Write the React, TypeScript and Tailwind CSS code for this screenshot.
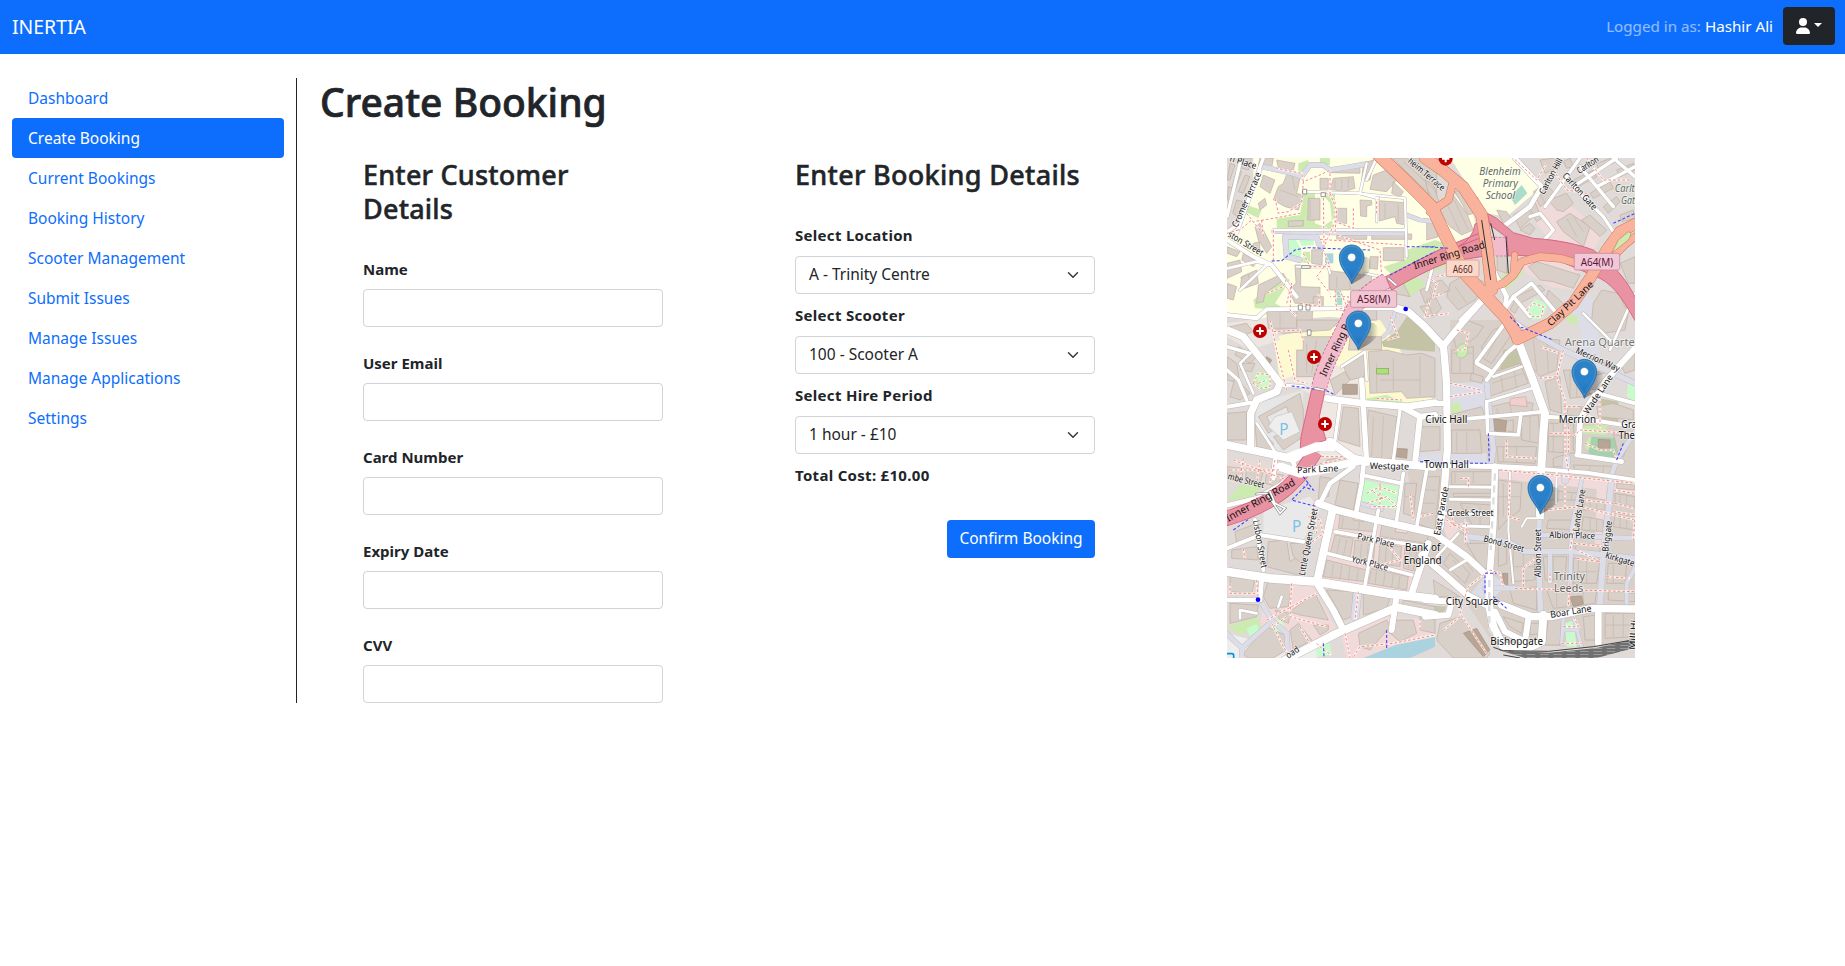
import { FaUser } from "react-icons/fa6";

const navItems = [
  "Dashboard",
  "Create Booking",
  "Current Bookings",
  "Booking History",
  "Scooter Management",
  "Submit Issues",
  "Manage Issues",
  "Manage Applications",
  "Settings",
];

const customerFields = ["Name", "User Email", "Card Number", "Expiry Date", "CVV"];

const bookingFields = [
  { label: "Select Location", value: "A - Trinity Centre" },
  { label: "Select Scooter", value: "100 - Scooter A" },
  { label: "Select Hire Period", value: "1 hour - £10" },
];

type Road = [width: number, d: string];
type Area = [fill: string, points: string];
type Label = [text: string, x: number, y: number, length: number, angle?: number, size?: number, fill?: string];

const areas: Area[] = [
  ["#ffffe5", "100,24 500,24 690,200 760,290 600,330 480,400 430,510 330,500 200,510 21,500 21,250 60,220 100,110"],
  ["#ffffe5", "690,24 885,24 965,110 860,200 800,190 740,100"],
  ["#ffffe5", "615,180 650,180 690,120 760,190 770,250 700,290 650,270 615,200"],
  ["#fdfad2", "160,560 240,545 480,510 645,760 440,760 400,680 280,700 180,690"],
  ["#ece5e0", "21,520 160,500 180,570 90,600 21,560"],
  ["#efe7e2", "180,690 340,640 420,690 430,920 300,920 290,740"],
  ["#e6e6e6", "110,760 250,720 245,900 180,920 105,890"],
  ["#f1dada", "940,130 1000,120 1150,250 1120,300 1000,290 950,220"],
  ["#f1dada", "900,340 980,330 1080,350 1060,420 990,410 920,370"],
  ["#e4dbd6", "21,920 220,940 180,1010 21,1000"],
  ["#f1dada", "320,1090 640,1160 590,1330 295,1290"],
  ["#f1dada", "150,1290 280,1310 350,1440 200,1520 120,1420"],
  ["#f1dada", "360,1440 500,1400 645,1410 645,1450 450,1524 380,1524"],
  ["#d9d0c9", "690,800 980,800 1245,840 1245,980 1245,1500 820,1480 700,1300 600,1200 560,950 690,960"],
  ["#f1dada", "830,962 1245,1000 1245,1030 830,985"],
  ["#f1dada", "650,1080 700,1120 790,1240 765,1260 690,1190"],
  ["#f1dada", "1130,1000 1160,1000 1150,1200 1125,1200"],
  ["#dddde8", "690,680 790,690 800,760 780,790 700,770"],
  ["#dddde8", "600,910 800,910 805,950 600,955"],
  ["#dddde8", "745,1340 805,1265 860,1305 820,1345"],
  ["#dddde8", "1030,440 1110,430 1130,490 1100,620 1060,610 1090,550"],
  ["#dddde8", "1075,495 1130,500 1140,620 1090,600"],
  ["#d9d0c9", "690,510 870,510 940,690 690,700"],
  ["#e9e9e9", "130,1080 270,1040 300,1080 250,1170 130,1150"],
  ["#eeeeee", "21,1450 210,1500 300,1480 290,1524 21,1524"],
  ["#cdebb0", "250,130 285,130 285,220 340,240 330,160 305,130 345,130 345,205 300,235 170,235 170,205 240,195"],
  ["#cdebb0", "235,40 265,30 268,65 235,65"],
  ["#cdebb0", "300,24 330,24 330,45 300,45"],
  ["#cdebb0", "80,165 125,180 115,205 75,185"],
  ["#cdebb0", "100,450 190,375 210,390 165,460 200,480 105,475"],
  ["#cdebb0", "490,350 600,315 580,375 620,400 570,440 530,420 510,370"],
  ["#cdebb0", "250,305 270,305 272,335 250,340"],
  ["#cdebb0", "560,300 645,270 700,290 560,345"],
  ["#cdebb0", "615,350 690,325 690,345 615,375"],
  ["#cdebb0", "95,680 120,660 155,670 155,700 140,725 110,715"],
  ["#cdebb0", "840,380 900,345 910,370 850,430"],
  ["#cdebb0", "1030,495 1070,495 1075,525 1050,520"],
  ["#cdebb0", "690,762 720,755 725,795 700,800"],
  ["#cdebb0", "1085,830 1160,820 1160,855 1085,850"],
  ["#cdebb0", "1105,860 1130,870 1125,905 1095,895"],
  ["#cdebb0", "440,745 500,735 550,755 440,765"],
  ["#cdebb0", "21,1050 60,1005 130,1005 90,1050"],
  ["#cdebb0", "21,1430 110,1400 125,1430 60,1455"],
  ["#cdebb0", "1180,290 1240,235 1240,275 1185,310"],
  ["#c8facc", "190,265 225,265 245,300 240,335 205,325"],
  ["#c8facc", "235,268 280,262 282,285 245,288"],
  ["#c8facc", "150,1420 190,1400 195,1510 165,1465"],
  ["#c8facc", "288,1490 330,1480 335,1515 290,1522"],
  ["#c8facc", "430,990 540,1010 530,1080 420,1055"],
  ["#c8facc", "920,480 945,445 985,465 965,505 935,510"],
  ["#c8facc", "1225,690 1245,690 1245,755 1220,740"],
  ["#c8facc", "80,1435 110,1422 118,1445 88,1458"],
  ["#c8facc", "1035,1420 1060,1410 1070,1490 1040,1490"],
  ["#aad3df", "315,310 340,310 340,340 315,340"],
  ["#aaddcc", "345,420 367,425 367,465 345,465"],
  ["#aaddcc", "870,140 905,105 922,130 885,165"],
  ["#a5d1ad", "1115,860 1190,865 1190,935 1105,910"],
  ["#c5c3a6", "485,575 530,545 560,500 590,500 645,560 645,605 560,600 490,590"],
  ["#c5c3a6", "850,600 890,590 905,645 840,660"],
  ["#c5c3a6", "1140,745 1195,755 1195,820 1135,805"],
  ["#aad3df", "430,1524 530,1484 645,1462 645,1490 570,1524"],
  ["#c8c4b0", "615,1365 680,1370 670,1390 615,1390"],
];

const buildings = [
  "205,60 240,85 230,130 250,135 235,180 195,170 160,150 175,110 190,100",
  "130,75 165,90 150,130 120,110",
  "120,24 160,24 155,55 115,45",
  "170,30 225,40 220,60 175,55",
  "265,145 300,145 300,210 263,210",
  "300,85 325,85 325,118 300,118",
  "335,55 420,52 420,70 335,68",
  "340,85 400,80 405,115 370,125 330,118",
  "350,175 380,175 380,220 350,220",
  "420,150 455,152 455,165 440,168 440,200 422,198",
  "478,152 555,158 555,225 530,220 525,200 478,213",
  "460,75 500,60 530,90 500,125 450,118",
  "430,40 460,30 450,90 425,90",
  "520,95 550,125 540,140 515,130",
  "205,213 250,211 250,228 205,230",
  "350,255 440,255 440,268 350,268",
  "455,250 575,252 575,268 455,268",
  "490,293 552,293 552,332 490,332",
  "450,320 475,320 472,358 448,355",
  "275,300 308,298 306,345 275,340",
  "225,345 242,345 242,410 300,412 300,460 225,460 205,420 228,400",
  "327,362 455,377 455,420 327,420",
  "280,440 310,440 310,475 280,475",
  "140,485 278,480 275,535 145,535",
  "395,470 470,480 470,510 395,510",
  "500,395 550,400 570,440 520,430",
  "115,405 190,370 198,385 135,430 130,455 110,460",
  "65,380 110,360 115,400 60,420",
  "21,340 60,330 65,365 21,385",
  "105,230 120,220 155,290 140,310 115,270",
  "115,160 135,145 140,165 120,180",
  "100,280 118,275 120,300 100,300",
  "21,400 50,410 40,450 21,445",
  "30,40 45,45 30,90 21,90",
  "50,60 65,65 45,120 35,115",
  "75,75 90,80 70,130 55,125",
  "25,110 40,115 30,150 21,150",
  "50,150 70,155 55,200 38,190",
  "65,24 95,24 85,60 65,55",
  "21,290 60,305 50,320 21,310",
  "70,310 110,335 100,350 65,330",
  "520,24 560,24 650,110 650,150 610,120",
  "575,24 620,24 650,60 650,90",
  "600,420 625,410 640,450 615,460",
  "600,470 645,460 645,500 620,500",
  "615,90 640,105 660,165 630,145",
  "655,165 700,135 740,190 760,240 725,255 690,230 670,200",
  "620,205 640,220 655,260 620,270",
  "705,125 725,120 760,190 745,195",
  "880,195 920,170 940,200 900,235",
  "925,165 945,155 965,205 950,215",
  "830,180 860,185 880,215 855,230",
  "900,240 930,220 945,235 930,255",
  "940,125 975,100 1000,125 985,150 960,170",
  "985,150 1040,130 1060,160 1030,185 1010,180",
  "1010,215 1050,190 1110,230 1090,290 1030,245",
  "1085,210 1110,195 1160,240 1140,260",
  "1030,35 1050,24 1060,50 1040,55",
  "960,30 1000,24 1020,50 975,70",
  "1060,90 1120,60 1130,80 1075,110",
  "1110,130 1170,95 1180,115 1120,145",
  "1150,170 1190,140 1200,155 1165,190",
  "1190,60 1240,40 1245,60 1200,80",
  "1130,40 1175,24 1190,34 1135,60",
  "1200,195 1240,180 1245,205 1205,215",
  "830,270 860,270 860,370 832,360",
  "690,400 740,370 800,400 765,450 715,480 680,440",
  "625,400 665,390 690,420 645,440",
  "620,450 645,440 665,475 640,500",
  "925,350 950,335 1080,375 1060,415 1000,395 960,390",
  "890,440 960,405 975,420 900,460 885,490 870,480",
  "985,420 1040,470 1020,500 975,455",
  "1120,460 1145,420 1195,430 1225,490 1215,540 1150,550 1115,510",
  "1200,340 1245,320 1245,400 1225,400",
  "165,540 230,540 230,510 360,510 330,540 190,550",
  "250,560 370,560 330,620 300,680 230,680 230,600 250,600",
  "390,560 485,560 485,600 385,600",
  "445,605 500,600 560,615 605,610 645,625 645,740 560,745 545,725 450,730",
  "370,650 435,610 435,680 390,690",
  "330,690 375,665 390,690 345,735",
  "440,840 445,780 530,800 520,930 445,925",
  "370,770 415,775 420,890 355,870",
  "115,800 240,730 250,780 250,860 190,900 160,860 220,840 200,770 140,800 160,840 145,850",
  "21,790 80,785 80,870 21,870",
  "105,820 160,880 155,905 110,890",
  "55,590 110,620 90,640 45,615",
  "70,640 105,640 95,665 60,660",
  "21,620 50,640 60,700 21,690",
  "45,680 90,730 60,750 30,740",
  "30,530 80,520 100,545 60,560",
  "700,560 740,510 790,530 770,560 710,600",
  "695,600 760,590 760,670 695,670",
  "785,590 820,540 865,520 870,560 815,640 790,625",
  "755,670 790,680 785,700 750,690",
  "690,795 785,770 795,800 700,810",
  "695,840 780,840 785,910 695,910",
  "600,830 660,830 660,900 600,905",
  "810,770 900,750 940,760 935,785 810,800",
  "810,670 900,640 925,700 805,740",
  "820,820 880,810 880,845 820,840",
  "905,800 955,795 960,880 905,870",
  "830,890 950,890 945,940 835,935",
  "905,560 1020,570 1010,660 960,680 925,640",
  "975,695 1020,680 1025,790 990,780",
  "1030,660 1090,660 1095,740 1050,745",
  "1045,770 1085,770 1080,800 1040,795",
  "985,820 1060,820 1065,910 985,905",
  "1000,925 1030,915 1030,950 1000,950",
  "1090,620 1160,640 1190,660 1110,680",
  "1130,770 1180,760 1240,780 1240,810 1135,800",
  "1060,860 1085,860 1080,900 1060,900",
  "1200,640 1245,610 1245,660 1215,670",
  "1060,945 1190,950 1180,980 1065,965",
  "695,965 815,965 815,1005 695,1005",
  "700,1030 815,1030 815,1040 700,1040",
  "21,950 70,955 65,990 21,985",
  "80,955 130,965 120,1000 75,995",
  "140,970 190,975 170,1010 135,1000",
  "320,930 370,920 375,940 320,950",
  "300,980 335,985 325,1040 295,1045",
  "360,990 415,1000 400,1080 345,1065",
  "555,1000 590,1000 580,1100 550,1090",
  "610,980 660,980 645,1140 590,1120",
  "360,1095 400,1100 400,1110 430,1115 430,1105 465,1112 460,1145 355,1135",
  "345,1155 400,1165 390,1225 330,1210",
  "405,1170 465,1180 460,1235 400,1225",
  "485,1125 530,1130 525,1145 560,1150 565,1135 625,1155 620,1180 480,1160",
  "480,1180 545,1190 540,1250 475,1240",
  "555,1190 610,1200 590,1265 550,1255",
  "320,1230 440,1260 435,1295 310,1280",
  "455,1255 565,1280 560,1320 445,1300",
  "145,1175 200,1170 210,1235 240,1215 250,1250 235,1275 140,1250",
  "210,1180 260,1180 245,1240 220,1220",
  "35,1200 110,1190 115,1230 35,1225",
  "45,1145 110,1120 115,1150 50,1180",
  "30,1280 105,1290 95,1330 30,1325",
  "145,1290 215,1300 205,1370 150,1375 130,1340",
  "30,1360 115,1365 110,1400 30,1420",
  "165,1380 210,1390 205,1420 180,1410",
  "210,1385 285,1330 325,1410 240,1395",
  "70,1510 140,1430 195,1455 200,1500 160,1524 80,1524",
  "235,1420 275,1470 220,1500 210,1440",
  "280,1425 325,1425 325,1440 300,1455",
  "320,1320 400,1325 395,1400 370,1410",
  "430,1330 510,1345 500,1375 430,1395",
  "550,1350 645,1370 645,1390 545,1375",
  "415,1450 500,1410 510,1430 450,1500 420,1490",
  "530,1410 580,1410 590,1450 540,1475 510,1450",
  "600,1400 645,1410 645,1450 600,1440",
  "690,1175 725,1145 800,1240 775,1255",
  "615,1170 660,1200 650,1240 615,1215",
  "690,1210 750,1270 735,1300 670,1240",
  "640,1290 720,1340 645,1340",
  "720,1060 735,1060 815,1065 810,1130 760,1130",
  "740,1180 815,1180 810,1260 780,1250",
  "835,990 905,1000 900,1080 860,1110 835,1140",
  "835,1180 860,1190 860,1240 835,1250",
  "870,1190 945,1215 945,1290 875,1295",
  "870,1320 950,1310 950,1380 880,1360",
  "970,1220 1040,1220 1035,1290 975,1290",
  "975,1020 1080,1030 1075,1050 980,1050",
  "985,1110 1080,1110 1075,1140 980,1135",
  "1095,1040 1155,1050 1155,1080 1090,1080",
  "1090,1100 1150,1110 1150,1145 1085,1140",
  "1070,1180 1140,1185 1140,1205 1065,1200",
  "1060,1225 1140,1230 1130,1300 1060,1300",
  "980,1320 1130,1320 1125,1360 1000,1375",
  "985,1410 1025,1400 1020,1485 975,1485",
  "1090,1400 1130,1395 1130,1470 1095,1470",
  "1155,1390 1245,1390 1245,1460 1155,1465",
  "850,1400 910,1420 905,1450 870,1430",
  "930,1420 960,1420 960,1450 930,1455",
  "660,1420 720,1400 810,1510 800,1524 700,1524 650,1470",
  "1185,1030 1245,1040 1245,1070 1185,1060",
  "1185,1090 1245,1100 1245,1140 1180,1130",
  "1165,1240 1220,1240 1215,1300 1160,1300",
  "1165,1325 1245,1330 1245,1355 1165,1350",
  "1190,1000 1245,1005 1245,1020 1190,1015",
  "1180,850 1230,870 1210,920 1195,915",
];

const wallLines = [
  "M60 385L85 372L90 405M215 75L225 120M180 120L235 140M345 90V115M365 88V120M385 84V116M495 160V205M535 165V215M270 150V205",
  "M350 380V415M390 382V418M180 490V530M230 485V530M470 640V725M520 625V720M600 620V735M480 690H600M260 580V670M290 570L275 670",
  "M700 610H755M720 595V665M850 530L800 620M815 700L910 670M840 665L850 725M880 650L890 715M830 775L835 795M870 765L875 790",
  "M370 1100L365 1135M420 1110L415 1140M360 1165L350 1215M380 1170L370 1218M425 1180L420 1228M445 1182L440 1230M500 1185L495 1242M520 1190L515 1245M570 1200L565 1255M590 1205L580 1260",
  "M340 1240L335 1285M365 1245L360 1288M390 1250L385 1292M415 1255L410 1294M470 1262L465 1304M495 1267L490 1308M520 1272L515 1312M540 1276L535 1316",
  "M850 1000V1100M835 1040H900M880 1200V1290M910 1205V1290M875 1250H945M1000 1225V1290M1075 1230V1300M1100 1230V1300M1060 1265H1130",
  "M1000 1030V1050M1030 1030V1050M1055 1032V1050M1110 1045V1080M1130 1048V1080M1110 1105V1142M1130 1108V1143M1200 1035V1062M1220 1038V1066M1200 1095V1134M1220 1098V1138",
  "M1010 1320V1370M1050 1320V1365M1090 1320V1362M1180 1395V1460M1210 1392V1460M1155 1425H1245M1180 1245V1300M700 1180L760 1265M700 1230L720 1255",
  "M1000 820V905M1030 820V908M985 860H1062M930 800V875M1050 665V740M1070 662V742M940 570L950 665M980 568L985 668M850 890V935M890 890V938M1110 950V970M1150 952V972",
  "M555 1040H585M600 1020H650M600 1060H645M600 1090H640M740 1070V1120M780 1070V1125M705 968V1000M760 968V1000M460 800L455 920M490 800L485 925M710 845V905M740 845V905",
  "M535 45L635 135M550 35L650 125M590 40L645 95M700 145L745 240M680 160L720 245M960 130L975 160M1040 205L1070 260M1060 200L1090 245M705 410L740 460M740 385L775 430",
];

const darkBuildings = [
  "368,703 412,703 412,733 368,733",
  "140,620 155,630 148,642 135,632",
  "528,895 562,897 560,925 526,920",
  "815,805 860,812 855,850 813,840",
  "1135,868 1170,870 1170,900 1135,895",
  "1050,1340 1085,1338 1090,1362 1060,1370",
  "730,1450 770,1435 810,1500 790,1520",
  "848,1270 863,1270 863,1305 848,1300",
];

const pedestrianWays: Road[] = [
  [14, "M125 50L210 68L245 80L270 45L310 45L330 60M330 60L380 52L440 42"],
  [16, "M195 260L290 262L300 290M195 260L200 320L240 330"],
  [10, "M160 245L340 250L550 252"],
  [12, "M560 195L600 210L645 215"],
  [16, "M745 1160L865 1175L915 1205L1055 1205L1155 1215L1245 1225"],
  [16, "M958 1095L955 1225L962 1390"],
  [18, "M1175 990L1150 1215L1140 1365"],
  [12, "M1085 990L1055 1135L1050 1305"],
  [14, "M965 1155L1245 1165"],
  [12, "M990 1205L990 1295"],
  [14, "M795 1315L885 1315"],
  [14, "M120 1350L155 1410L200 1450L205 1524"],
  [14, "M155 1415L65 1495L65 1524M21 1452L62 1490"],
  [24, "M413 1325L405 1400"],
  [16, "M800 690L810 800L820 900L812 950"],
  [22, "M1040 925L1035 990"],
  [14, "M1245 845L1190 930L1170 990"],
  [12, "M418 1060L485 1078"],
  [10, "M450 1190L455 1230"],
  [10, "M735 1110L738 1165L745 1175"],
  [12, "M1245 1255L1220 1300L1220 1360"],
  [10, "M1030 1400L1025 1480M1060 1400L1085 1490M1030 1440L1075 1440"],
  [16, "M860 510L930 545L1030 600L1245 700"],
  [10, "M525 485L510 540L490 560"],
];

const whiteRoads: Road[] = [
  [10, "M130 24L95 120L50 250M21 200L60 40"],
  [12, "M21 270L100 320L155 345L230 440"],
  [10, "M21 245L60 220L120 60"],
  [8, "M21 355L110 335L155 345M60 420L140 345"],
  [12, "M21 495L110 505L140 478L400 475L530 475"],
  [7, "M160 240L555 240M555 150L560 320M250 125L420 130L475 145M420 130L440 40"],
  [6, "M230 350L325 350L330 370M435 370L500 385M470 150L470 215M410 130L555 145"],
  [22, "M530 475L565 485L615 530L670 590"],
  [8, "M470 24L440 90M645 25L700 80"],
  [22, "M21 540L70 560L110 610L180 700L170 725L110 750L92 790L92 890"],
  [12, "M21 770L92 758"],
  [24, "M21 885L130 907L220 927L270 900L330 875L400 925L440 935"],
  [10, "M180 705L250 710M21 590L90 610M21 660L55 690L80 750"],
  [8, "M90 610L60 640L100 730M110 820L165 905"],
  [20, "M320 745L430 760L560 770L645 758"],
  [16, "M425 690L432 800L440 940"],
  [8, "M365 650L435 605L440 690"],
  [10, "M360 760L345 870"],
  [18, "M545 770L600 800L585 940M600 800L645 795"],
  [10, "M540 780L520 930"],
  [22, "M670 585L680 700L682 900L670 1050L660 1130"],
  [20, "M672 585L725 520L805 430"],
  [14, "M780 280L860 440L850 500"],
  [24, "M895 575L935 680L975 790L970 850L962 990L960 1095"],
  [16, "M645 945L830 950L960 957"],
  [12, "M960 957L1100 968L1245 990"],
  [20, "M825 950L820 1120L808 1290"],
  [24, "M400 930L640 950M410 935L240 970L180 950"],
  [16, "M615 760L680 760"],
  [9, "M800 755L935 715"],
  [11, "M800 755L803 850L895 855L903 790M745 806L970 785"],
  [12, "M980 800L1100 808L1245 830"],
  [18, "M1245 595L1155 695L1105 765L1080 810L1075 910"],
  [12, "M1115 725L1245 760"],
  [14, "M1070 915L1205 935"],
  [12, "M770 635L865 505M770 640L815 665M800 690L860 610L890 585"],
  [8, "M930 550L880 510L860 500M820 680L905 650"],
  [26, "M21 1265L150 1285L290 1295L500 1330L645 1347"],
  [24, "M338 1080L292 1290"],
  [22, "M295 1060L350 1080L470 1110L645 1150"],
  [14, "M300 1060L330 1000L400 950M410 1080L425 1000L430 950"],
  [20, "M290 1300L340 1380L370 1440"],
  [24, "M195 1530L350 1450L500 1385L530 1372L645 1395"],
  [18, "M530 1335L515 1440"],
  [11, "M345 1145L480 1170L620 1190M320 1210L500 1255L575 1275"],
  [11, "M475 1080L435 1305M530 1110L550 970M590 1130L620 960M425 975L545 1000"],
  [20, "M625 1180L575 1330"],
  [12, "M21 1195L120 1155L250 1175M105 1110L130 1260"],
  [14, "M125 1290L120 1350L21 1350"],
  [14, "M21 1066L110 1045L180 1005L230 965L215 925M165 930L160 985"],
  [8, "M60 1405L60 1380L110 1390M185 1340L175 1370"],
  [20, "M645 1150L670 1170L740 1220L805 1280"],
  [20, "M605 1215L675 1275L745 1337L800 1365"],
  [24, "M808 1280L808 1370L820 1430L850 1490L930 1492L965 1475L970 1395"],
  [22, "M845 1365L935 1400L995 1400L1115 1375L1245 1377"],
  [18, "M825 1385L855 1445L915 1475L925 1405"],
  [20, "M1135 1375L1135 1480"],
  [18, "M615 1350L695 1355L685 1395L615 1400"],
  [9, "M675 1090L815 1095M690 1048L815 1050M690 1010L815 1012M730 1128L810 1130"],
  [6, "M870 960L865 1140L880 1300M905 1130L920 1105L970 1105M1010 960L1008 1060"],
  [8, "M650 1220L715 1150M690 1260L740 1230"],
  [10, "M945 300L1000 240L960 190L930 200M1060 110L1150 200L1190 260M975 170L1080 24"],
  [10, "M1060 110L1190 24M1080 50L1130 110M1130 110L1245 50M1180 24L1245 80M1130 110L1180 170"],
  [14, "M850 230L930 170L965 110L885 24"],
  [9, "M640 340L620 420M780 450L720 510"],
  [11, "M880 440L935 400L1010 490M840 500L880 440L930 500"],
  [8, "M1245 430L1170 600M1090 490L1190 590"],
];

const primaryRoads: Road[] = [
  [36, "M475 14L555 90L635 170L680 265L735 370L790 430L860 505L895 562"],
  [34, "M615 24L665 58L730 112L785 195L802 300L815 420"],
  [22, "M630 185L685 150L702 85"],
  [22, "M805 415L850 400L880 375L905 335L960 320L1020 325L1090 345"],
  [18, "M880 370L884 315"],
  [32, "M892 568L990 520L1060 460L1110 385L1160 300L1200 245L1250 220"],
  [20, "M1115 320L1180 320L1215 285L1245 260"],
];

const footways = [
  "M165 145L175 190L205 185L245 160L250 95L300 75L330 60M250 95L245 70L170 55",
  "M310 130L312 290L345 215L345 150L320 130L310 130M330 70L330 130",
  "M80 190L100 215L160 205L240 190M130 260L125 210M160 240L160 330",
  "M400 175L400 235L345 215M470 190L470 150M300 268L555 285M350 255L480 300L485 380",
  "M120 240L95 210L60 240L45 240M330 130L350 180L345 250",
  "M250 310L270 350L330 350L310 300M320 340L290 380L330 430M345 420L350 480L380 470L360 420",
  "M200 460L215 400L210 480L230 500M380 500L385 440L330 440M240 460L300 470L295 430",
  "M21 250L55 240M140 430L190 410L200 385",
  "M100 700L115 670L150 675L150 710L120 715L100 700M115 700L140 690",
  "M205 600L225 690L260 700M150 510L170 600L200 720M160 545L240 540L250 575",
  "M470 745L545 750M510 500L535 560L500 570",
  "M30 960L200 960M40 930L200 990M70 925L60 990M120 930L110 1000M165 930L150 1000",
  "M290 920L370 920L380 935M300 940L340 935L370 925",
  "M620 380L650 400L640 440L670 430M630 450L615 500L690 490M650 380L690 370",
  "M740 110L780 150M1000 60L1040 120L1100 130M980 40L950 90L880 24M1100 24L1150 90L1230 90",
  "M920 480L940 460L970 470L965 500L935 500L920 480",
  "M710 540L745 550L735 600L705 600M690 700L780 720M690 740L790 725",
  "M1030 600L1010 680L960 685M1010 680L1035 750L1035 900L1050 990M1030 770L1080 770M990 850L1050 850M1045 830L1045 910",
  "M1100 790L1140 830L1140 740M1095 880L1140 900L1180 900L1190 930M1060 860L1080 840L1240 850",
  "M860 870L860 920L950 925M960 590L1020 610",
  "M840 960L1000 975L1245 1000M870 990L865 1100L900 1110",
  "M975 1080L1080 1070L1245 1110M1035 1000L1035 1080M1180 1020L1245 1030M1090 1050L1180 1060M1065 1120L1050 1200",
  "M910 1310L910 1255L960 1215M885 1315L1245 1325M1050 1300L1045 1370M990 1270L990 1300M1245 1095L1240 1170",
  "M1060 1180L1150 1190M1070 1200L1140 1235L1070 1225M1030 1430L1075 1430L1060 1400M1025 1480L1085 1480",
  "M735 1340L745 1310L810 1260L840 1270L850 1310M735 1185L740 1120L690 1130M745 1150L680 1110M700 1125L695 1080",
  "M725 1370L720 1390L800 1510M670 1440L720 1400",
  "M440 1030L480 1010L530 1030M480 1000L480 1070M440 1060L500 1040L530 1070L450 1070M460 1025L495 1050",
  "M215 1300L210 1400L320 1430M140 1410L290 1330M155 1420L190 1490L210 1520M240 1430L270 1480M110 1290L115 1350",
  "M160 1430L200 1400M400 1520L420 1490L520 1480L645 1455M600 1440L600 1410M415 1325L405 1410M30 1300L30 1330L110 1330",
  "M265 1100L300 1110L310 1150L270 1180M280 1060L290 1150M570 1030L580 1110M640 1090L600 1100M500 1180L540 1230L460 1250",
  "M70 1195L75 1230M290 1480L310 1500L335 1515M375 1450L390 1524",
  "M1180 1085L1245 1095M1185 1060L1245 1075M1160 1280L1230 1285M720 985L745 985L745 1010",
];

const cycleways = [
  "M155 333L185 332L225 300L260 293L450 300M510 375L645 305M560 290L645 290M615 290L690 295",
  "M215 708L270 715L320 722L345 735M690 940L800 940M805 850L808 940M1180 220L1245 190",
  "M870 500L900 530L1000 570M265 1000L215 1050L290 1070M40 1140L90 1105M250 980L280 1020L250 1010",
  "M795 1330L795 1270L830 1270M820 1340L860 1375M500 1440L500 1500M310 1480L312 1520M1210 880L1190 930M600 935L680 940",
];

const mapLabels: Label[] = [
  ["n Place", 28, 33, 82, 17],
  ["Cromer Terrace", 52, 234, 178, -66],
  ["ston Street", 22, 258, 118, 31],
  ["heim Terrace", 562, 36, 136, 40],
  ["Carlton Hill", 973, 135, 118, -62],
  ["Carlton", 1078, 72, 72, -33],
  ["Carlton Gate", 1026, 78, 140, 48],
  ["Clay Pit Lane", 993, 530, 180, -44, 29],
  ["Inner Ring Road", 584, 358, 222, -17, 31],
  ["Inner Ring R", 317, 682, 170, -65, 30],
  ["Inner Ring Road", 25, 1116, 232, -29, 31],
  ["Park Lane", 232, 970, 124, -3],
  ["Westgate", 449, 957, 118, 1],
  ["mbe Street", 22, 987, 112, 14],
  ["Lisbon Street", 99, 1112, 145, 80],
  ["Little Queen Street", 254, 1278, 205, -79],
  ["Park Place", 410, 1167, 114, 13],
  ["York Place", 393, 1235, 112, 14],
  ["Greek Street", 680, 1098, 140, 0, 25],
  ["East Parade", 660, 1157, 147, -80],
  ["Bond Street", 789, 1174, 125, 15],
  ["Albion Place", 988, 1164, 137, 1],
  ["Albion Street", 963, 1282, 145, -90],
  ["Lands Lane", 1076, 1146, 128, -81],
  ["Briggate", 1165, 1206, 93, -83],
  ["Kirkgate", 1154, 1223, 90, 17],
  ["Boar Lane", 992, 1404, 125, -9, 29],
  ["Merrion Way", 1065, 608, 142, 24],
  ["Wade Lane", 1104, 794, 136, -56],
  ["Mill Hi", 1244, 1500, 90, -86, 24],
  ["oad", 205, 1526, 42, -34, 27],
  ["Civic Hall", 616, 818, 126, 0, 30],
  ["Town Hall", 612, 955, 134, 0, 30],
  ["Merrion", 1016, 819, 112, 0, 30],
  ["City Square", 677, 1364, 157, 0, 30],
  ["Bishopgate", 811, 1485, 158, 0, 30],
  ["Bank of", 555, 1204, 106, 0, 31],
  ["England", 551, 1241, 114, 0, 31],
  ["Gra", 1204, 833, 46, 0, 30],
  ["The", 1196, 868, 48, 0, 30],
  ["Arena Quarte", 1034, 588, 210, 0, 34, "#777777"],
  ["Trinity", 1001, 1289, 94, 0, 34, "#666666"],
  ["Leeds", 1002, 1327, 88, 0, 34, "#666666"],
];

const italicLabels: Label[] = [
  ["Blenheim", 778, 76, 124, 0, 30],
  ["Primary", 788, 111, 106, 0, 30],
  ["School", 797, 146, 88, 0, 30],
  ["Carlt", 1184, 127, 60, 0, 30],
  ["Gat", 1203, 162, 42, 0, 30],
];

const hospitals = [
  [677, 26],
  [120, 543],
  [282, 621],
  [315, 822],
];

const pins = [
  [395, 402],
  [415, 600],
  [1093, 745],
  [961, 1093],
];

function Roads({ roads, casing, fill, edge = 3 }: { roads: Road[]; casing: string; fill: string; edge?: number }) {
  return (
    <g fill="none" strokeLinejoin="round" strokeLinecap="round">
      {roads.map(([w, d], i) => (
        <path key={`c${i}`} d={d} stroke={casing} strokeWidth={w + edge} />
      ))}
      {roads.map(([w, d], i) => (
        <path key={`f${i}`} d={d} stroke={fill} strokeWidth={w} />
      ))}
    </g>
  );
}

function MapText({ label, italic }: { label: Label; italic?: boolean }) {
  const [text, x, y, length, angle = 0, size = 27, fill = italic ? "#5f6d5b" : "#111111"] = label;
  const onMotorway = text.startsWith("Inner") || text.startsWith("Clay");
  return (
    <text
      transform={`translate(${x} ${y}) rotate(${angle})`}
      fontSize={size}
      fontStyle={italic ? "italic" : "normal"}
      textLength={length}
      lengthAdjust="spacingAndGlyphs"
      fill={fill}
      stroke="#ffffff"
      strokeOpacity={onMotorway ? 0 : 0.6}
      strokeWidth={5}
      strokeLinejoin="round"
      paintOrder="stroke"
    >
      {text}
    </text>
  );
}

function Shield({ x, y, w, text, fill, stroke, color }: { x: number; y: number; w: number; text: string; fill: string; stroke: string; color: string }) {
  return (
    <g>
      <rect x={x} y={y} width={w} height={50} rx={5} fill={fill} stroke={stroke} strokeWidth={2.5} />
      <text x={x + w / 2} y={y + 38} fontSize={30} textAnchor="middle" textLength={w - 38} lengthAdjust="spacingAndGlyphs" fill={color}>
        {text}
      </text>
    </g>
  );
}

function Pin({ x, y }: { x: number; y: number }) {
  return (
    <g transform={`translate(${x} ${y})`}>
      <path d="M0 0C16 -8 36 -18 52 -36C68 -58 58 -84 36 -82C20 -74 8 -28 0 0Z" fill="url(#pinShadow)" />
      <path
        d="M0 0C-5 -22 -37 -46 -37 -79C-37 -101 -20 -117 0 -117C20 -117 37 -101 37 -79C37 -46 5 -22 0 0Z"
        fill="url(#pinFill)"
        stroke="#2a6fa8"
        strokeWidth={2.5}
      />
      <path d="M0 -10C-7 -28 -33 -50 -33 -79C-33 -98 -18 -113 0 -113C18 -113 33 -98 33 -79C33 -50 7 -28 0 -10Z" fill="none" stroke="#6bb0e0" strokeOpacity={0.5} strokeWidth={2.5} />
      <circle cy={-80} r={12.5} fill="#ffffff" stroke="#2f79b5" strokeWidth={2} />
    </g>
  );
}

function CityMap() {
  return (
    <svg viewBox="21 24 1224 1500" className="block h-[500px] w-[408px]" fontFamily="'Noto Sans', sans-serif">
      <defs>
        <linearGradient id="pinFill" x1="0" y1="0" x2="0" y2="1">
          <stop offset="0" stopColor="#2e83c4" />
          <stop offset="0.6" stopColor="#2a80ca" />
          <stop offset="1" stopColor="#1f6fb8" />
        </linearGradient>
        <linearGradient id="pinShadow" x1="0" y1="0" x2="1" y2="0">
          <stop offset="0" stopColor="#000000" stopOpacity="0.4" />
          <stop offset="0.6" stopColor="#000000" stopOpacity="0.28" />
          <stop offset="1" stopColor="#000000" stopOpacity="0" />
        </linearGradient>
        <pattern id="rails" width="40" height="9" patternUnits="userSpaceOnUse">
          <rect width="40" height="9" fill="#707070" />
          <rect width="26" height="1.5" fill="#c4c4c4" />
        </pattern>
      </defs>
      <rect x="21" y="24" width="1224" height="1500" fill="#e0dbd8" />
      {areas.map(([fill, points], i) => (
        <polygon key={i} points={points} fill={fill} />
      ))}
      <g fill="#d9d0c9" stroke="#bfaea1" strokeWidth={2}>
        {buildings.map((points, i) => (
          <polygon key={i} points={points} />
        ))}
      </g>
      <g fill="none" stroke="#c6b8ac" strokeWidth={2}>
        {wallLines.map((d, i) => (
          <path key={i} d={d} />
        ))}
      </g>
      <g fill="#b8a595" stroke="#a39182" strokeWidth={2}>
        {darkBuildings.map((points, i) => (
          <polygon key={i} points={points} />
        ))}
      </g>
      <polygon points="255,245 300,240 305,270 252,265" transform="translate(617 500)" fill="#f1cfcf" stroke="#c9aaa5" strokeWidth={2} />
      <rect x="470" y="655" width="36" height="17" fill="#aedf7e" stroke="#7ea853" strokeWidth={2} />
      <path d="M165 800L215 785L240 845L190 870L145 830Z" fill="#eeeeee" stroke="#bbbbbb" strokeWidth={1.5} />
      <path d="M105 675L150 672L150 705L125 718Z" fill="#c8facc" />
      <path d="M715 590C725 575 745 580 743 605C741 625 715 630 710 615Z" fill="#cdebb0" stroke="#99cc99" strokeWidth={2} />
      <Roads roads={pedestrianWays} casing="#b9b9c4" fill="#dddde8" edge={2} />
      <Roads roads={whiteRoads} casing="#bdb8b4" fill="#ffffff" />
      <g fill="none" stroke="#fa8072" strokeWidth={2.8} strokeDasharray="8 6">
        {footways.map((d, i) => (
          <g key={i}>
            <path d={d} stroke="#ffffff" strokeOpacity={0.7} strokeWidth={7} strokeDasharray="none" />
            <path d={d} />
          </g>
        ))}
      </g>
      <path d="M500 392C430 430 400 470 385 510C350 580 310 650 297 715" fill="none" stroke="#d0608a" strokeWidth={48} strokeDasharray="9 4" />
      <path d="M500 392C430 430 400 470 385 510C350 580 310 650 297 715" fill="none" stroke="#f1bccb" strokeWidth={44} />
      <path
        d="M497 380C560 350 610 320 690 285L790 245L815 315L690 335C620 360 570 390 515 420ZM275 718L316 718L298 800L318 870L288 880L285 903L240 906L243 860ZM860 262L810 225L802 190L830 205L880 248L940 265C1020 270 1080 285 1120 300L1180 350C1220 390 1240 430 1250 450L1250 520C1220 470 1190 410 1140 385L1000 325L900 316L865 318ZM765 222L788 215L790 260L715 290Q760 265 765 222Z"
        fill="#e892a2"
        stroke="#d4587a"
        strokeWidth={2.5}
      />
      <path d="M800 262H862V318H805Z" fill="#f1bccb" stroke="#d0608a" strokeWidth={2} strokeDasharray="8 4" />
      <path d="M285 905L240 975L205 1010C160 1050 90 1085 10 1108" fill="none" stroke="#d4587a" strokeWidth={46} />
      <path d="M285 905L240 975L205 1010C160 1050 90 1085 10 1108" fill="none" stroke="#e892a2" strokeWidth={42} />
      <path d="M180 950L240 970L330 955M200 925L290 890L345 890" fill="none" stroke="#ffffff" strokeWidth={26} />
      <Roads roads={primaryRoads} casing="#d0785a" fill="#f9b29c" />
      <path d="M1175 310L1195 270L1225 245Q1240 248 1225 270L1200 290Z" fill="#cdebb0" stroke="#d0785a" strokeWidth={2} />
      <path d="M785 210L812 390M812 220L824 270M858 260L865 370" fill="none" stroke="#333333" strokeWidth={3} />
      <g fill="none" stroke="#4040ff" strokeWidth={3.2} strokeDasharray="9 6">
        {cycleways.map((d, i) => (
          <path key={i} d={d} />
        ))}
      </g>
      <path d="M505 385L528 405M285 715L310 720M110 1032L140 1030L180 1090L195 1075L165 1060L150 1025" fill="none" stroke="#777777" strokeWidth={8} strokeLinecap="round" />
      <path d="M505 385L528 405M285 715L310 720M110 1032L140 1030L180 1090L195 1075L165 1060L150 1025" fill="none" stroke="#ffffff" strokeWidth={5} strokeLinecap="round" />
      <path d="M248 118H260V132H248ZM303 128H316V140H303ZM245 347H270V355H245ZM235 465H247V480H235ZM258 465H270V480H258ZM262 540H273V556H262Z" fill="#ffffff" stroke="#666666" strokeWidth={2} />
      <path d="M835 1500L985 1508L1130 1494L1250 1465L1250 1492L1130 1524L915 1524Z" fill="url(#rails)" />
      <path d="M820 1492L850 1502L985 1504L1120 1490L1250 1468M850 1515L900 1524" fill="none" stroke="#444444" strokeWidth={3} />
      <path d="M808 1290V1440L845 1490" fill="none" stroke="#dddddd" strokeWidth={7} strokeDasharray="22 14" />
      <path d="M825 970L812 1200" fill="none" stroke="#dddddd" strokeWidth={7} strokeDasharray="22 14" />
      <circle cx="557" cy="477" r="7" fill="#0000ff" />
      <circle cx="114" cy="1349" r="7" fill="#0000ff" />
      <g fontSize="46" fill="#79c1e6">
        <text x="178" y="856">P</text>
        <text x="216" y="1147">P</text>
      </g>
      <path d="M21 1511H36Q41 1511 41 1517V1524" fill="none" stroke="#0092da" strokeWidth={5} />
      {mapLabels.map((label) => (
        <MapText key={`${label[0]}${label[1]}`} label={label} />
      ))}
      {italicLabels.map((label) => (
        <MapText key={label[0]} label={label} italic />
      ))}
      <Shield x={392} y={422} w={138} text="A58(M)" fill="#f0c8d4" stroke="#d08aa0" color="#5f1238" />
      <Shield x={679} y={330} w={98} text="A660" fill="#fad8cc" stroke="#d99a80" color="#5c2a20" />
      <Shield x={1063} y={310} w={136} text="A64(M)" fill="#f0c8d6" stroke="#d08aa0" color="#5f1238" />
      {hospitals.map(([x, y]) => (
        <g key={`${x}-${y}`}>
          <circle cx={x} cy={y} r={21} fill="#bf0000" />
          <path d={`M${x - 11} ${y}H${x + 11}M${x} ${y - 11}V${y + 11}`} stroke="#ffffff" strokeWidth={6} />
        </g>
      ))}
      {pins.map(([x, y]) => (
        <Pin key={`${x}-${y}`} x={x} y={y} />
      ))}
    </svg>
  );
}

export default function App() {
  return (
    <div className="min-h-[966px] bg-white font-['Noto_Sans',sans-serif] text-base text-[#212529]">
      <header className="flex h-[54px] items-center justify-between bg-[#0d6efd] pr-[10px] pb-0.5 pl-3 text-white">
        <a className="pt-0.5 text-[19.4px] leading-[30px]">INERTIA</a>
        <div className="flex items-center">
          <span className="mr-[10px] text-[15.2px] leading-6">
            <span className="text-white/55">Logged in as: </span>
            <span>Hashir Ali</span>
          </span>
          <button className="flex h-[38px] w-[52px] items-center justify-center gap-1 rounded bg-[#212529]">
            <FaUser className="h-4 w-3.5" />
            <svg viewBox="0 0 8 4" className="mb-0.5 h-1 w-2">
              <path d="M0 0H8L4 4Z" fill="#fff" />
            </svg>
          </button>
        </div>
      </header>

      <div className="flex pt-6 pl-3">
        <nav className="flex h-[625px] w-[285px] shrink-0 flex-col border-r border-[#212529] pr-3">
          {navItems.map((item) => (
            <a
              key={item}
              className={
                item === "Create Booking"
                  ? "rounded bg-[#0d6efd] px-4 py-2 text-[15.5px] leading-6 text-white"
                  : "rounded px-4 py-2 text-[15.5px] leading-6 text-[#0d6efd]"
              }
            >
              {item}
            </a>
          ))}
        </nav>

        <main className="pl-[23px]">
          <h1 className="text-[39px] leading-[48px] font-medium [-webkit-text-stroke:0.7px]">Create Booking</h1>
          <div className="mt-8 flex pl-[43px]">
            <section className="w-[300px]">
              <h3 className="mb-8 text-[27px] leading-[33.6px] font-medium tracking-[0.2px] [-webkit-text-stroke:0.5px]">
                Enter Customer
                <br />
                Details
              </h3>
              <div className="flex flex-col gap-6">
                {customerFields.map((field) => (
                  <label key={field} className="block">
                    <span className="mb-2 block text-[15px] leading-6 font-bold">{field}</span>
                    <input className="block h-[38px] w-full rounded border border-[#ced4da] px-3" />
                  </label>
                ))}
              </div>
            </section>

            <section className="ml-[132px] w-[300px]">
              <h3 className="mb-8 text-[27px] leading-[33.6px] font-medium tracking-[0.3px] whitespace-nowrap [-webkit-text-stroke:0.5px]">Enter Booking Details</h3>
              {bookingFields.map(({ label, value }) => (
                <div key={label} className="mb-2.5">
                  <span className="mb-2.5 block text-[15px] leading-[22px] font-bold tracking-[0.3px]">{label}</span>
                  <div className="flex h-[38px] items-center justify-between rounded border border-[#ced4da] pr-3.5 pl-[13px] text-[15.5px] leading-6">
                    <span className="pb-0.5">{value}</span>
                    <svg viewBox="0 0 16 16" className="mr-px size-3" fill="none" stroke="#343a40" strokeWidth="2" strokeLinecap="round" strokeLinejoin="round">
                      <path d="m2 5 6 6 6-6" />
                    </svg>
                  </div>
                </div>
              ))}
              <p className="text-[15px] leading-[22px] font-bold tracking-[0.3px]">Total Cost: £10.00</p>
              <div className="mt-[34.4px] flex justify-end">
                <button className="h-[38px] w-[148px] rounded bg-[#0d6efd] pb-0.5 text-[15.5px] leading-6 whitespace-nowrap text-white">Confirm Booking</button>
              </div>
            </section>

            <div className="ml-[132px]">
              <CityMap />
            </div>
          </div>
        </main>
      </div>
    </div>
  );
}
